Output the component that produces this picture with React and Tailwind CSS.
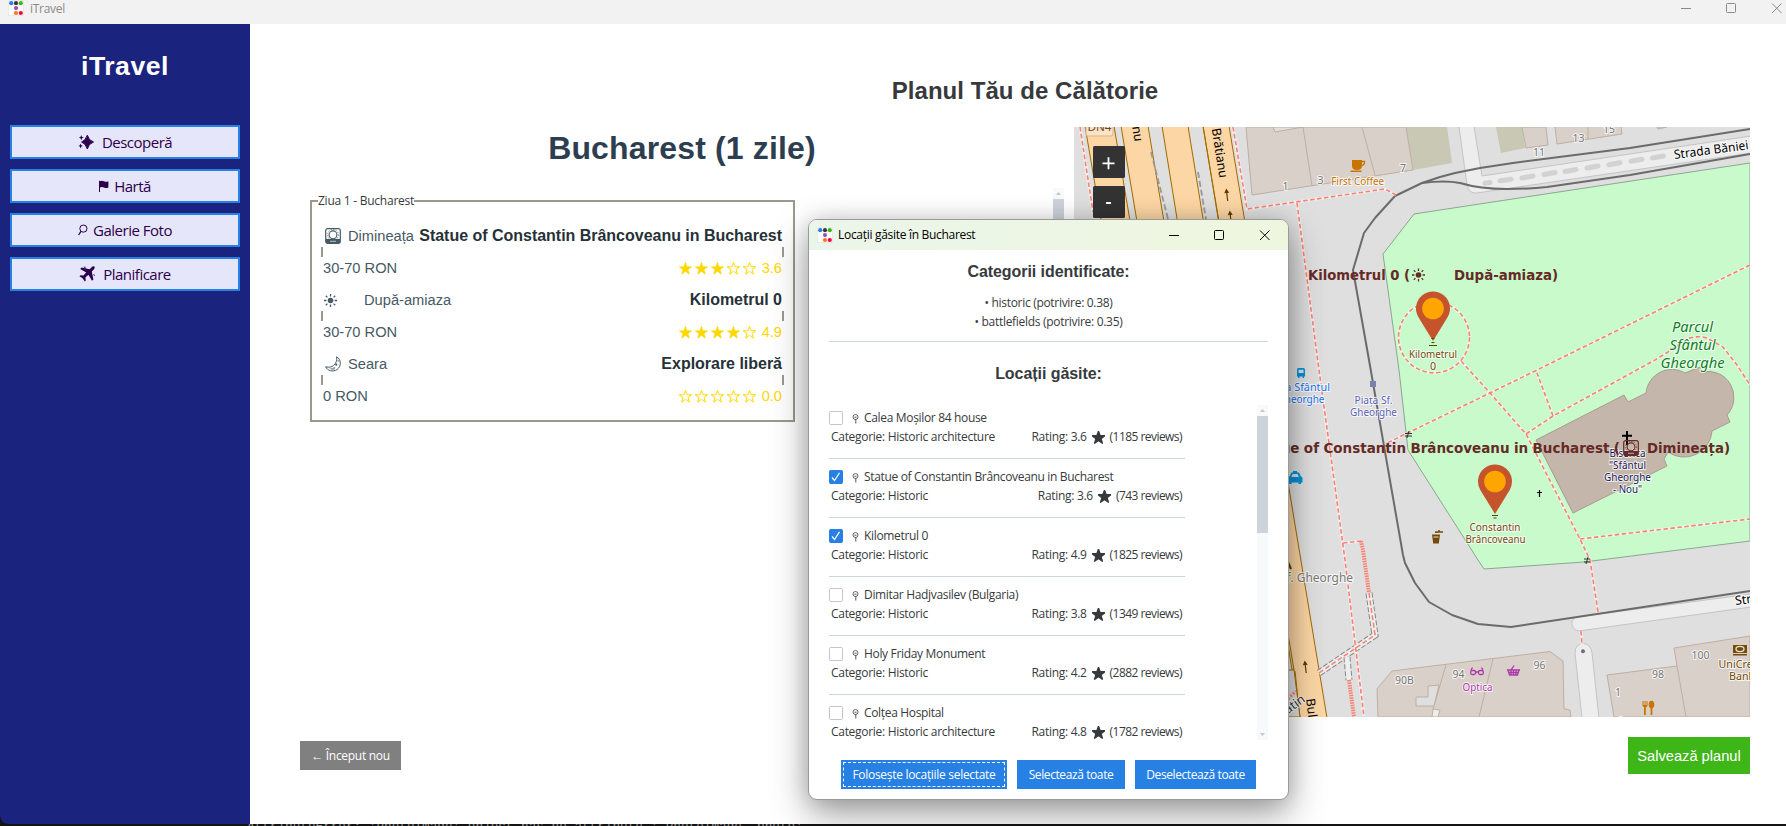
import React from "react";

const sans = "font-['Liberation_Sans',Arial,sans-serif]";
const ui = "font-['Open_Sans','Noto_Sans',sans-serif]";

function AppLogo({ className }) {
  return (
    <svg className={className} viewBox="0 0 16 16">
      <rect x="0.3" y="0.3" width="15.4" height="15.4" rx="1.5" fill="#fff" stroke="#d5d5d5" strokeWidth="0.6" />
      <circle cx="3.2" cy="3.2" r="2.1" fill="#2780e3" />
      <circle cx="8" cy="3.2" r="2.1" fill="#373a3c" />
      <circle cx="12.8" cy="3.2" r="2.1" fill="#3fb618" />
      <circle cx="8" cy="8.1" r="2.1" fill="#9954bb" />
      <circle cx="8" cy="13" r="2.1" fill="#ff7518" />
      <circle cx="12.8" cy="13" r="2.1" fill="#ff0039" />
    </svg>
  );
}

function SparkleIcon() {
  return (
    <svg className="h-4 w-4" viewBox="0 0 16 16" fill="currentColor">
      <path d="M9.3 1.2 Q10.6 6.4 15.5 8 Q10.6 9.6 9.3 15 Q7.8 9.6 3.6 8 Q7.8 6.4 9.3 1.2Z" stroke="currentColor" strokeWidth="1" />
      <path d="M3.2 1 L4 3 L6 3.6 L4 4.3 L3.2 6.3 L2.5 4.3 L0.8 3.6 L2.5 3Z" />
      <path d="M2.6 9.6 L3.3 11.3 L5 12 L3.3 12.6 L2.6 14.4 L1.9 12.6 L0.3 12 L1.9 11.3Z" />
    </svg>
  );
}
function FlagIcon() {
  return (
    <svg className="h-3 w-[10px]" viewBox="0 0 10 12">
      <path d="M0.5 0.8V12" stroke="currentColor" strokeWidth="1" />
      <path d="M0.8 1.2 Q3 0.2 5 1.2 T9.4 1.2 V7.4 Q7 8.4 5 7.4 T0.8 7.4Z" fill="currentColor" />
    </svg>
  );
}
function LoupeIcon() {
  return (
    <svg className="h-3 w-[10px]" viewBox="0 0 10 12" fill="none" stroke="currentColor">
      <circle cx="5.4" cy="4.6" r="3.6" />
      <path d="M3 7.4 L0.6 11" strokeWidth="1.3" />
    </svg>
  );
}
function PlaneIcon() {
  return (
    <svg className="h-4 w-4" viewBox="0 0 16 16" fill="currentColor">
      <path d="M15.4 0.6 Q14 -0.1 12.6 1.2 L10.6 3.2 L2.6 1.6 L1.2 3 L7.2 6.6 L4.4 9.6 L1.4 9.2 L0.4 10.2 L3.6 12.2 L5.8 15.6 L6.8 14.6 L6.4 11.6 L9.4 8.8 L13 14.8 L14.4 13.4 L12.8 5.4 L14.8 3.4 Q16.2 1.8 15.4 0.6Z" />
      <path d="M4.5 0.8h2v2M14 8.4h1.6v2" />
    </svg>
  );
}

function SunriseShape() {
  return (
    <>
      <rect x="0.7" y="0.7" width="14.6" height="14.6" rx="2" fill="none" stroke="currentColor" strokeWidth="1.2" />
      <path d="M1 11h14v3.4l-1 .9H2l-1-.9z" fill="currentColor" />
      <circle cx="8" cy="6.8" r="3.9" fill="none" stroke="currentColor" strokeWidth="1.1" />
      <circle cx="8" cy="6.8" r="5.4" fill="none" stroke="currentColor" strokeWidth="0.8" strokeDasharray="1.2 1.3" />
      <path d="M5 13.3h6" stroke="#fff" strokeWidth="0.8" opacity="0.8" />
    </>
  );
}
function SunShape() {
  return (
    <>
      <circle cx="6.5" cy="6.5" r="2.8" fill="currentColor" />
      <path d="M6.5 0V2.4M6.5 10.6V13M0 6.5H2.4M10.6 6.5H13M1.8 1.8L3.4 3.4M9.6 9.6L11.2 11.2M1.8 11.2L3.4 9.6M9.6 3.4L11.2 1.8" stroke="currentColor" strokeWidth="1.3" />
    </>
  );
}
function MoonIcon() {
  return (
    <svg className="h-4 w-4" viewBox="0 0 16 16">
      <path d="M11.6 0.8 C16.4 3.2 16.6 10.4 12 13.6 C7.6 16.4 2.4 14.6 0.6 10.8 C4.6 11.8 6.8 10.8 8.4 9.6 C11.4 7 12.2 4.4 11.6 0.8Z" fill="none" stroke="currentColor" />
      <path d="M4 12.2 Q7 12.6 9 11 L10.6 11.6 L9.6 13.6 Q7 14.6 4 12.2Z" fill="currentColor" opacity=".55" />
      <circle cx="11.3" cy="8.7" r="1.1" fill="currentColor" />
      <circle cx="13.2" cy="5" r=".7" fill="currentColor" />
    </svg>
  );
}

const STAR = "M6.5 0.3 L8.1 4.8 L12.8 4.8 L9 7.6 L10.4 12.2 L6.5 9.4 L2.6 12.2 L4 7.6 L0.2 4.8 L4.9 4.8Z";
function Star({ filled }) {
  return (
    <svg className="h-[13px] w-[13px]" viewBox="0 0 13 13">
      <path d={STAR} fill={filled ? "#ffd700" : "none"} stroke="#ffd700" strokeWidth={filled ? 0.6 : 1} />
    </svg>
  );
}

function NavButton({ icon, label, gap }) {
  return (
    <button className={`flex h-[34px] w-full items-center justify-center border-2 border-[#2780e3] bg-[#e6e6fa] text-[15px] leading-none text-[#2d004b] ${ui} ${gap}`}>
      {icon}
      <span className="tracking-[-0.5px]">{label}</span>
    </button>
  );
}

function Sidebar() {
  return (
    <aside className="flex w-[250px] flex-col rounded-bl-lg bg-[#1a237e] px-[10px]">
      <h1 className={`mt-[26px] text-center text-[26.67px] leading-[32px] font-bold tracking-[0.5px] text-white ${sans}`}>iTravel</h1>
      <nav className="mt-[43px] flex flex-col gap-[10px]">
        <NavButton icon={<SparkleIcon />} label="Descoperă" gap="gap-[8px]" />
        <NavButton icon={<FlagIcon />} label="Hartă" gap="gap-[5px]" />
        <NavButton icon={<LoupeIcon />} label="Galerie Foto" gap="gap-[5px]" />
        <NavButton icon={<PlaneIcon />} label="Planificare" gap="gap-[8px]" />
      </nav>
    </aside>
  );
}

const slots = [
  { icon: <svg className="ml-0.5 h-4 w-4" viewBox="0 0 16 16"><SunriseShape /></svg>, gap: "gap-[7px]", period: "Dimineața", place: "Statue of Constantin Brâncoveanu in Bucharest", price: "30-70 RON", stars: 3, score: "3.6" },
  { icon: <svg className="ml-px h-[13px] w-[13px]" viewBox="0 0 13 13"><SunShape /></svg>, gap: "gap-[27px]", period: "După-amiaza", place: "Kilometrul 0", price: "30-70 RON", stars: 4, score: "4.9" },
  { icon: <span className="ml-0.5"><MoonIcon /></span>, gap: "gap-[7px]", period: "Seara", place: "Explorare liberă", price: "0 RON", stars: 0, score: "0.0" },
];

function DayPlan() {
  return (
    <fieldset className="mt-[5px] ml-[10px] h-[229px] w-[485px] border-2 border-[#9c988d] px-[9px]">
      <legend className={`ml-[-3px] h-4 text-[12px] leading-4 tracking-[-0.25px] text-[#373a3c] ${ui}`}>Ziua 1 - Bucharest</legend>
      <div className={`mt-[18px] flex flex-col text-[14.67px] leading-4 text-[#455a64] ${sans}`}>
        {slots.map((s) => (
          <div key={s.place} className="h-16">
            <div className="flex h-[18px] items-center justify-between px-0.5">
              <div className={`flex items-center whitespace-nowrap ${s.gap}`}>
                {s.icon}
                <span>{s.period}</span>
              </div>
              <span className="text-[16px] font-bold tracking-[-0.02px] whitespace-nowrap text-[#263238]">{s.place}</span>
            </div>
            <div className="mt-[2px] flex h-[10px] justify-between">
              <i className="w-0.5 bg-[#9c988d]" />
              <i className="w-0.5 bg-[#9c988d]" />
            </div>
            <div className="mt-0.5 flex h-[18px] items-center justify-between px-0.5">
              <span>{s.price}</span>
              <span className="flex items-center gap-[3px] text-[#ffd700]">
                {[0, 1, 2, 3, 4].map((i) => <Star key={i} filled={i < s.stars} />)}
                <span className="ml-[3px]">{s.score}</span>
              </span>
            </div>
          </div>
        ))}
      </div>
    </fieldset>
  );
}

function Txt({ x, y, size = 10.7, fill, halo = "#ffffff", len, anchor = "middle", rotate, weight, italic, hw = 2, ws, children }) {
  return (
    <text
      x={x} y={y} fontSize={size} fill={fill} stroke={halo} strokeWidth={halo === "none" ? 0 : hw} strokeOpacity="0.75" paintOrder="stroke"
      textAnchor={anchor} textLength={len} lengthAdjust="spacingAndGlyphs" fontWeight={weight} fontStyle={italic ? "italic" : undefined}
      wordSpacing={ws} transform={rotate ? `rotate(${rotate} ${x} ${y})` : undefined}
    >
      {children}
    </text>
  );
}

const footways = [
  "M1080 127 L1093 212", "M1233 127 L1247 209 L1385 189 L1396 195", "M1297 203 L1319 370 L1345 560 L1364 717",
  "M1343 543 L1361 541", "M1750 265 L1537 370 L1490 393 L1387 443",
  "M1461 361 L1490 393 L1526 434 L1580 539 L1590 560 L1598 612", "M1581 631 L1582 645",
  "M1526 434 L1553 416 L1655 360 L1668 352 L1687 339 Q1697 335 1707 338 L1723 347 L1737 365 L1750 385",
  "M1553 416 L1537 373", "M1580 539 L1750 519",
];
const steps = ["M1361 541 L1363 550 L1369 593", "M1349 680 L1354 717"];
const subways = ["M1369 593 L1375 635 L1319 673", "M1347 657 L1349 680"];
const numbers = [
  ["1", 1285.5, 190], ["3", 1320.5, 184], ["7", 1403, 172], ["11", 1539, 156], ["13", 1578.5, 142], ["15", 1609, 133],
  ["90B", 1404.5, 684], ["94", 1458.5, 678], ["96", 1539.5, 669], ["98", 1658, 678], ["100", 1700.5, 659], ["1", 1618, 696], ["3", 1621, 725],
];

function OneWay({ x, y }) {
  return (
    <g transform={`translate(${x} ${y}) rotate(-7)`}>
      <path d="M0 6V-4" stroke="#5c3d00" strokeWidth="1.2" />
      <path d="M-2.500 -2 L0 -6.500 L2.500 -2Z" fill="#5c3d00" />
    </g>
  );
}
function Pin({ x, y }) {
  return (
    <g transform={`translate(${x} ${y})`}>
      <path d="M0 0 L-14.700 -24 A17 17 0 1 1 14.700 -24Z" fill="#c5542d" />
      <circle cx="0" cy="-32.500" r="10.8" fill="#ffa500" />
    </g>
  );
}

function MapView() {
  const brown = "#734a08";
  const dark = "#652a25";
  return (
    <svg className="h-[590px] w-[676px] font-['Noto_Sans',sans-serif]" viewBox="1074 127 676 590">
      <rect x="1074" y="127" width="676" height="590" fill="#dfdfdf" />
      <g fill="#c8c8b4">
        <path d="M1406 127L1413 170L1452 163L1447 127Z" />
        <path d="M1496 127L1501 153L1525 148L1522 127Z" />
      </g>
      <g fill="#d9d0c9" stroke="#bfaea2" strokeWidth="1">
        <path d="M1246 127L1252 195L1413 170L1406 127Z" />
        <path d="M1303 127L1312 186M1362 127L1375 175" />
        <path d="M1273 127L1275 132L1303 127Z" fill="#dfdfdf" />
        <path d="M1522 127L1526 148L1548 145L1546 127Z" />
        <path d="M1555 127L1557 144L1622 134L1621 127M1588 127V139" />
        <path d="M1657 127L1658 129L1667 127Z" />
        <path d="M1378 717L1377 689L1392 671L1550 651.5L1563 661L1564 709L1570 710L1571 717Z" />
        <path d="M1446 665L1433 709M1493 659L1479 717" />
        <path d="M1428 686L1439 685L1434 706L1416 706L1416 697L1428 697Z" fill="#dfdfdf" />
        <path d="M1433 709L1440 710L1438 717H1432Z" fill="#ededed" />
        <path d="M1607 675L1677 666L1674 648L1750 636V717H1614Z" />
        <path d="M1677 666L1686 717" />
      </g>
      <path d="M1750 163L1440 210L1414 214L1383 254L1399 370L1408 450L1478 560L1484 569L1584 562L1750 541Z" fill="#c8facc" stroke="#8da68f" strokeWidth="1" />
      <g fill="#ededed" stroke="#c4c4c4" strokeWidth="1">
        <path d="M1459 127L1467 185Q1469 194 1477 193L1751 153V136L1482 176L1474 127" />
        <path d="M1751 594L1577 617Q1571 619 1572 625Q1574 632 1582 630.500L1751 607" />
        <path d="M1582 718L1575 653Q1575 644 1583 643.500Q1591 644 1592 653L1599 718" />
      </g>
      <circle cx="1583" cy="651.300" r="2" fill="#707070" />
      <path d="M1485 183.200l5-.7M1500 180.700l11-1.500M1522 178l11-2M1544 174.500l11-2M1565 171.500l11-2M1587 168l11-2M1609 164.800l11-2M1631 161.300l11-2M1652.500 158l11-2" stroke="#d2d2d2" strokeWidth="5" strokeLinecap="round" />
      <g fill="#fcd6a4" stroke="#a06b00" strokeWidth="1">
        <path d="M1085 126L1186 718H1214L1114 126Z" />
        <path d="M1121 126L1220 718H1247L1148 126Z" />
        <path d="M1162 126L1258 718H1284L1188 126Z" />
        <path d="M1203 126L1294 670L1280 674V718H1300L1295 671M1203 126L1300 718H1327L1229 126Z" />
      </g>
      <path d="M1287 670H1294L1300 717H1284Z" fill="#dfdfdf" stroke="#a06b00" />
      <path d="M1151 152L1168 219M1198 172L1206 219" stroke="#999" strokeWidth="1.8" strokeDasharray="6 3" fill="none" />
      <g fill="none" stroke="#6b6b6b" strokeWidth="2" strokeLinejoin="round">
        <path d="M1750 129L1630 148L1513 163L1480 168L1455 173L1440 177L1422 183L1395 196L1375 218L1364 233L1353 270L1369 360L1403 555L1405 563L1415 583L1429 602L1452 615L1478 624L1511 627L1750 591" />
        <path d="M1422 183Q1445 180 1460 183Q1480 189 1507 189Q1530 189 1547 187L1630 175L1750 154" />
      </g>
      <path d="M1536 440L1624 395L1628 402L1646 393A26 26 0 0 1 1685 373L1700 367L1702 372A26 26 0 0 1 1727 415L1730 422L1712 431A28 28 0 0 1 1668 452L1664 459L1667 466L1573 513Z" fill="#c4b6ab" stroke="#a99b90" strokeWidth="1" />
      {subways.map((d) => (
        <g key={d} fill="none">
          <path d={d} stroke="#888" strokeWidth="7" strokeDasharray="5 2" />
          <path d={d} stroke="#eee" strokeWidth="5" />
        </g>
      ))}
      <g fill="none">
        {footways.map((d) => <path key={d} d={d} stroke="#fff" strokeOpacity="0.5" strokeWidth="3" />)}
        {footways.map((d) => <path key={d} d={d} stroke="#fa8072" strokeWidth="1.600" strokeDasharray="4.500 2.500" />)}
        <path d="M1369 593L1375 635L1319 673" stroke="#fa8072" strokeWidth="1.500" strokeDasharray="5 2.500" />
        {steps.map((d) => <path key={d} d={d} stroke="#fa8072" strokeWidth="4" strokeDasharray="1.500 1" />)}
        <path d="M1288 699L1296 691" stroke="#fa8072" strokeWidth="3" strokeDasharray="2 1.500" />
        <circle cx="1434" cy="337.300" r="35.500" stroke="#fff" strokeOpacity="0.5" strokeWidth="3" />
        <circle cx="1434" cy="337.300" r="35.500" stroke="#fa8072" strokeWidth="1.600" strokeDasharray="4.500 2.500" />
      </g>
      <g stroke="#333" strokeWidth="1">
        <path d="M1408 433.500h7M1408 436h7M1412 431l-2 7M1587 559h6M1587 562h6M1591 557l-2 7" transform="translate(-3 0)" />
      </g>

      <rect x="1086" y="117" width="27" height="19" rx="2" fill="#fbe3c8" stroke="#d9b48a" />
      <Txt x={1099.5} y={131} size={11} fill="#6b4a2a" halo="none" len={24}>DN4</Txt>
      <Txt x={1134.500} y={142} size={12.500} fill="#000" halo="none" anchor="end" rotate={82}>Ion C. Brătianu</Txt>
      <Txt x={1219.500} y={178.500} size={12.500} fill="#000" halo="none" anchor="end" rotate={81}>Ion C. Brătianu</Txt>
      <OneWay x={1227} y={195} />
      <OneWay x={1230.500} y={217} />
      <OneWay x={1305.500} y={667} />
      <path d="M1288 562L1291 569" stroke="#5c3d00" strokeWidth="2" />
      <Txt x={1306} y={699} size={12.500} fill="#000" halo="none" anchor="start" rotate={83}>Bulevardul</Txt>
      <Txt x={1306} y={701} size={12.500} fill="#333" anchor="end" rotate={-36}>Slatin</Txt>
      <Txt x={1674.500} y={159} size={12.500} fill="#000" anchor="start" rotate={-7.500} len={75}>Strada Băniei</Txt>
      <Txt x={1735.500} y={605} size={12.500} fill="#000" anchor="start" rotate={-7}>Strada</Txt>
      {numbers.map(([t, x, y]) => <Txt key={t + x} x={x} y={y} size={10.5} fill="#757575">{t}</Txt>)}

      <g fill="#c77400">
        <path d="M1352 160h10v6q0 4-5 4t-5-4zM1350.500 170.500h11v1.500h-11z" />
        <path d="M1362 161.500h2.500q0 4-3 4" fill="none" stroke="#c77400" strokeWidth="1.300" />
        <path d="M1642.500 701v4.500q0 1.500 1.500 1.500v8h1.800v-8q1.700 0 1.700-1.500v-4.500h-1v4h-1v-4h-1v4h-1v-4z" />
        <ellipse cx="1651.500" cy="704.500" rx="2.800" ry="3.800" />
        <path d="M1650.600 706h1.800v9h-1.800z" />
      </g>
      <Txt x={1357.700} y={184.500} fill="#c77400" len={53}>First Coffee</Txt>
      <Txt x={1433} y={357.500} fill={brown} len={48}>Kilometrul</Txt>
      <Txt x={1433} y={369.500} fill={brown}>0</Txt>
      <Txt x={1495} y={531} fill={brown} len={51}>Constantin</Txt>
      <Txt x={1495.500} y={543} fill={brown} len={60}>Brâncoveanu</Txt>
      <g fill={brown}>
        <path d="M1432 534.500h8l-1.200 9h-5.600z" />
        <path d="M1433.500 537h5" stroke="#dfdfdf" />
        <path d="M1435 532h8M1439 532v-2M1436 533q0-1 2-1" fill="none" stroke={brown} strokeWidth="1.500" />
        <rect x="1733" y="645" width="14" height="8" />
        <rect x="1733" y="654" width="14" height="1.500" />
      </g>
      <ellipse cx="1740" cy="649" rx="4" ry="2.600" fill="none" stroke="#eadfcf" strokeWidth="1.300" />
      <Txt x={1718.500} y={667.500} fill={brown} anchor="start">UniCredit</Txt>
      <Txt x={1729} y={679.500} fill={brown} anchor="start">Bank</Txt>
      <g fill="none" stroke="#ac39ac" strokeWidth="1.300">
        <rect x="1470.700" y="670.500" width="4.800" height="4" rx="1.500" />
        <rect x="1478.500" y="670.500" width="4.800" height="4" rx="1.500" />
        <path d="M1475.500 672h3M1471 670l1.500-2.500M1483 670l-1.500-2.500" />
        <path d="M1507 670h13M1508 670l1.500 5h8l1.500-5M1508.500 672.500h10M1511 670v5M1513.500 670v5M1516 670v5M1511 670l3-4.500" />
      </g>
      <Txt x={1477.500} y={691} fill="#ac39ac" len={30}>Optica</Txt>

      <g fill="#0092da">
        <path d="M1297 369.500q0-1.500 1.500-1.500h5q1.500 0 1.500 1.500v7h-1v1.500h-1.500v-1.500h-3v1.500h-1.500v-1.500h-1zM1298.500 369.700v3.300h5v-3.300z" fillRule="evenodd" />
        <path d="M1293 471h4v1.500h2l2 4 1.500 1v5h-1.500v1.500h-2.500v-1.500h-7v1.500h-2.500v-1.500h-1v-5l1.500-1 2-4h1.500zM1292.500 474l-1.200 3h7.500l-1.200-3z" fillRule="evenodd" />
      </g>
      <Txt x={1330} y={391} fill="#1a73f0" anchor="end" len={64}>Piața Sfântul</Txt>
      <Txt x={1324.500} y={402.500} fill="#1a73f0" anchor="end" len={47}>Gheorghe</Txt>
      <rect x="1370" y="381" width="6" height="6" fill="#7981b0" />
      <Txt x={1373.500} y={403.500} fill="#5b62b5" len={38}>Piața Sf.</Txt>
      <Txt x={1373.500} y={415.500} fill="#5b62b5" len={47}>Gheorghe</Txt>
      <Txt x={1353} y={582} size={12.300} fill="#777" anchor="end" len={104}>Piața Sf. Gheorghe</Txt>
      <g>
        <Txt x={1692.500} y={331.500} size={14.700} fill="#0f7f1f" italic len={41}>Parcul</Txt>
        <Txt x={1692.500} y={349.500} size={14.700} fill="#0f7f1f" italic len={46}>Sfântul</Txt>
        <Txt x={1692.500} y={367.500} size={14.700} fill="#0f7f1f" italic len={64}>Gheorghe</Txt>
      </g>
      <path d="M1627 431v14M1622 435.700h10" stroke="#000" strokeWidth="2" />
      <path d="M1539.500 490v7M1537 492.500h5" stroke="#000" strokeWidth="1.200" />
      <Txt x={1627.500} y={457} fill="#1b1b54" len={36}>Biserica</Txt>
      <Txt x={1627.500} y={469} fill="#1b1b54" len={37}>"Sfântul</Txt>
      <Txt x={1627.500} y={481} fill="#1b1b54" len={47}>Gheorghe</Txt>
      <Txt x={1627.500} y={493} fill="#1b1b54" len={29}>- Nou"</Txt>

      <Pin x={1433} y={341} />
      <Pin x={1495} y={514} />
      <path d="M1429 345.500h8M1431.500 342.500h3M1431.500 338.500h3M1492 515.500h6M1493.500 518h3" fill="none" stroke="#4d4a00" strokeWidth="1" />
      <g className="font-['DejaVu_Sans_Condensed','DejaVu_Sans',sans-serif]">
        <Txt x={1308} y={280} size={14.670} weight="bold" fill={dark} halo="none" anchor="start" len={102}>Kilometrul 0 (</Txt>
        <Txt x={1454} y={280} size={14.670} weight="bold" fill={dark} halo="none" anchor="start" len={104}>După-amiaza)</Txt>
        <Txt x={1620} y={453} size={14.670} weight="bold" fill={dark} halo="none" anchor="end" len={371} ws="-0.3">Statue of Constantin Brâncoveanu in Bucharest (</Txt>
        <Txt x={1647} y={453} size={14.670} weight="bold" fill={dark} halo="none" anchor="start" len={83}>Dimineața)</Txt>
      </g>
      <g transform="translate(1412 268.500)" color={dark}><SunShape /></g>
      <g transform="translate(1623 440)" color={dark}><SunriseShape /></g>

      <rect x="1093" y="146" width="32" height="32" rx="1.500" fill="#333" />
      <rect x="1093" y="186" width="32" height="32" rx="1.500" fill="#333" />
      <path d="M1102.500 163.300h12M1108.500 157.300v12M1106 203h5" stroke="#fff" strokeWidth="1.800" />
    </svg>
  );
}

function PinGlyph() {
  return (
    <svg className="h-[10px] w-[7px]" viewBox="0 0 7 10" fill="none" stroke="#555">
      <circle cx="3.500" cy="3" r="2.500" strokeWidth="0.9" />
      <path d="M3.800 5V9.500M2.500 3.200h2" strokeWidth="1" />
    </svg>
  );
}

const places = [
  ["Calea Moșilor 84 house", "Historic architecture", "3.6", 1185, false],
  ["Statue of Constantin Brâncoveanu in Bucharest", "Historic", "3.6", 743, true],
  ["Kilometrul 0", "Historic", "4.9", 1825, true],
  ["Dimitar Hadjvasilev (Bulgaria)", "Historic", "3.8", 1349, false],
  ["Holy Friday Monument", "Historic", "4.2", 2882, false],
  ["Colțea Hospital", "Historic architecture", "4.8", 1782, false],
];

function PlaceRow({ place }) {
  const [name, category, rating, reviews, checked] = place;
  return (
    <li className="mb-[5px] h-[54px] shrink-0 border-b border-[#ced4da] pt-[5px]">
      <div className="flex h-[15px] items-center">
        <span className={`flex h-[14px] w-[14px] items-center justify-center rounded-[1.5px] border ${checked ? "border-[#2780e3] bg-[#2780e3]" : "border-[#c3c6c9] bg-white"}`}>
          {checked && (
            <svg className="h-[10px] w-[10px]" viewBox="0 0 10 10"><path d="M1 5.500L3.500 8.500L8.500 0.800" fill="none" stroke="#fff" strokeWidth="1.200" /></svg>
          )}
        </span>
        <span className="mt-[3px] ml-[9px] flex"><PinGlyph /></span>
        <span className="mt-px ml-[5px] tracking-[-0.33px]">{name}</span>
      </div>
      <div className="mt-1 flex h-[16px] items-center justify-between pr-[3px] pl-[2px]">
        <span>Categorie: {category}</span>
        <span className="flex items-center tracking-[-0.3px]">
          Rating: {rating}
          <svg className="mx-[5px] h-[13px] w-[13px]" viewBox="0 0 13 13"><path d={STAR} fill="#373a3c" stroke="#373a3c" strokeWidth="1.400" strokeLinejoin="round" /></svg>
          <span className="tracking-[-0.55px]">({reviews} reviews)</span>
        </span>
      </div>
    </li>
  );
}

function Scrollbar({ className, thumb }) {
  return (
    <div className={`flex w-[11px] flex-col justify-between bg-[#f8f9fa] ${className}`}>
      <div className="flex h-[11px] shrink-0 items-center justify-center"><svg className="h-[3px] w-[5px]" viewBox="0 0 5 3"><path d="M0 3L2.500 0L5 3Z" fill="#c4c9d0" /></svg></div>
      <div className="flex-1"><div className={`bg-[#ced2da] ${thumb}`} /></div>
      <div className="flex h-[11px] shrink-0 items-center justify-center"><svg className="h-[3px] w-[5px]" viewBox="0 0 5 3"><path d="M0 0L2.500 3L5 0Z" fill="#c4c9d0" /></svg></div>
    </div>
  );
}

function Dialog() {
  return (
    <section className={`absolute top-[219px] left-[808px] flex h-[581px] w-[481px] flex-col overflow-hidden rounded-[9px] border border-[#9a9a9a] bg-white text-[12px] leading-4 tracking-[-0.3px] text-[#373a3c] shadow-[0_14px_36px_rgba(0,0,0,0.38),0_0_20px_rgba(0,0,0,0.12)] ${ui}`}>
      <header className="flex h-[30px] shrink-0 items-center bg-linear-to-r from-[#ebf6ea] to-[#eff6df] pr-[15px] pl-[8px] text-black">
        <AppLogo className="h-4 w-4" />
        <span className="ml-[5px] flex-1">Locații găsite în Bucharest</span>
        <svg className="h-[12px] w-[112px]" viewBox="0 0 112 12" fill="none" stroke="#000">
          <path d="M8 6.500h10M99 1.500l9.500 9.500M108.500 1.500L99 11" />
          <rect x="53.500" y="1.500" width="9" height="9" rx="1" />
        </svg>
      </header>
      <div className="flex flex-1 flex-col px-5">
        <h3 className={`mt-[12px] text-center text-[16px] leading-5 font-bold tracking-[-0.06px] ${sans}`}>Categorii identificate:</h3>
        <p className="mt-[11px] text-center leading-[19px]">• historic (potrivire: 0.38)</p>
        <p className="text-center leading-[19px]">• battlefields (potrivire: 0.35)</p>
        <hr className="mt-[10px] border-[#ced4da]" />
        <h3 className={`mt-[22px] text-center text-[16px] leading-5 font-bold tracking-[-0.06px] ${sans}`}>Locații găsite:</h3>
        <div className="mt-[21px] flex h-[335px] justify-between">
          <ul className="flex w-[356px] flex-col overflow-hidden whitespace-nowrap">
            {places.map((p) => <PlaceRow key={p[0]} place={p} />)}
          </ul>
          <Scrollbar thumb="h-[117px]" className="h-full" />
        </div>
        <div className="mt-5 flex justify-center gap-[10px] text-white">
          <button className="flex h-[29px] w-[166px] bg-[#2780e3] p-0.5"><span className="flex h-full w-full items-center justify-center border border-dashed border-white">Folosește locațiile selectate</span></button>
          <button className="h-[29px] w-[108px] bg-[#2780e3] tracking-[-0.4px]">Selectează toate</button>
          <button className="h-[29px] w-[121px] bg-[#2780e3] tracking-[-0.4px]">Deselectează toate</button>
        </div>
      </div>
    </section>
  );
}

export default function App() {
  return (
    <div className="relative h-[826px] w-[1786px] overflow-hidden bg-[#141414]">
      <div className="flex h-[824px] flex-col overflow-hidden rounded-bl-lg">
        <header className={`flex h-6 shrink-0 items-start bg-[#f2f2f2] pl-2 text-[12px] text-[#8a8a8a] ${ui}`}>
          <AppLogo className="h-4 w-4" />
          <span className="ml-[6px] flex-1 leading-[17px] tracking-[-0.3px]">iTravel</span>
          <svg className="mt-[2px] h-[12px] w-[106px]" viewBox="0 0 106 12" fill="none" stroke="#8a8a8a">
            <path d="M1 6.500h10M92 1.500l9.500 9.500M101.500 1.500L92 11" />
            <rect x="46.500" y="1.500" width="9" height="9" rx="1" />
          </svg>
        </header>
        <div className="flex flex-1">
          <Sidebar />
          <main className="flex flex-1 flex-col bg-white pr-9 pl-[50px]">
            <h2 className={`mt-[53px] text-center text-[24px] leading-[28px] font-bold tracking-[0.05px] text-[#373a3c] ${sans}`}>Planul Tău de Călătorie</h2>
            <div className="mt-[22px] flex h-[590px] justify-between">
              <div className="w-[764px]">
                <h2 className={`mt-[3px] text-center text-[32px] leading-[36px] font-bold tracking-[0.15px] text-[#2c3e50] ${sans}`}>Bucharest (1 zile)</h2>
                <div className="mt-[22px] flex items-start justify-between">
                  <DayPlan />
                  <Scrollbar thumb="h-[420px]" className="h-[529px]" />
                </div>
              </div>
              <MapView />
            </div>
            <div className="mt-5 flex items-start justify-between">
              <button className={`mt-1 h-[29px] w-[101px] bg-[#808080] text-[12px] tracking-[-0.3px] text-white ${ui}`}>← Început nou</button>
              <button className={`h-[37px] w-[122px] bg-[#3fb618] text-[14.67px] text-white ${sans}`}>Salvează planul</button>
            </div>
          </main>
        </div>
      </div>
      <div className="h-0.5 overflow-hidden pl-[247px] font-['Liberation_Mono',monospace] text-[12.700px] leading-[6px] whitespace-pre text-[#9a9a9a]">AttributeError: 'PhotoImage' object has no attribute '_PhotoImage__photo'</div>
      <Dialog />
    </div>
  );
}
